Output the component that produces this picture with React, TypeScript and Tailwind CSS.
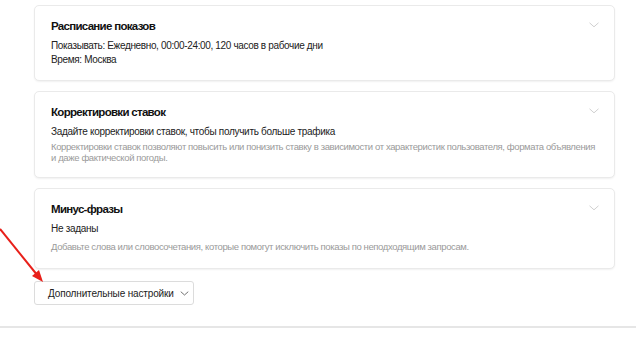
import { ReactNode } from 'react';

function Chevron({ className }: { className?: string }) {
  return (
    <svg viewBox="0 0 10 6" className={className} fill="none">
      <path d="M0.5 0.8 L5 4.8 L9.5 0.8" stroke="currentColor" strokeWidth="1" />
    </svg>
  );
}

function Card({ title, children }: { title: string; children: ReactNode }) {
  return (
    <div className="relative bg-white border border-[#eaeaea] rounded-[5px] shadow-[0_1px_2px_rgba(0,0,0,0.06)] px-4 pt-[11px]">
      <Chevron className="absolute right-[15px] top-[16px] w-[10px] h-[6px] text-[#d0d0d0]" />
      <div className="text-[11.5px] leading-[18px] font-bold tracking-[-0.7px] text-[#111]">{title}</div>
      {children}
    </div>
  );
}

export default function App() {
  return (
    <div
      className="relative w-[636px] h-[338px] bg-white overflow-hidden"
      style={{ fontFamily: '"Liberation Sans", Arial, sans-serif' }}
    >
      <div className="w-[581px] ml-[34px] pt-[5px] flex flex-col gap-[10px]">
        <Card title="Расписание показов">
          <div className="mt-1 pb-[13px] text-[10px] leading-[14px] tracking-[-0.35px] text-[#222]">
            <div>Показывать: Ежедневно, 00:00-24:00, 120 часов в рабочие дни</div>
            <div>Время: Москва</div>
          </div>
        </Card>

        <Card title="Корректировки ставок">
          <div className="mt-1 text-[10px] leading-[14px] tracking-[-0.3px] text-[#222]">
            Задайте корректировки ставок, чтобы получить больше трафика
          </div>
          <div className="mt-[2px] pb-[14px] text-[9.5px] leading-[11px] tracking-[-0.38px] text-[#9a9a9a] whitespace-nowrap">
            Корректировки ставок позволяют повысить или понизить ставку в зависимости от характеристик пользователя, формата объявления
            <br />
            и даже фактической погоды.
          </div>
        </Card>

        <Card title="Минус-фразы">
          <div className="mt-1 text-[10px] leading-[14px] tracking-[-0.3px] text-[#222]">Не заданы</div>
          <div className="mt-[5px] pb-[15px] text-[9.5px] leading-[12px] tracking-[-0.38px] text-[#9a9a9a]">
            Добавьте слова или словосочетания, которые помогут исключить показы по неподходящим запросам.
          </div>
        </Card>
      </div>

      <div className="ml-[34px] mt-[12px]">
        <button className="w-[160px] h-[24px] bg-white border border-[#dcdcdc] rounded-[3px] flex items-center pl-[13px] gap-[6px] text-[10px] tracking-[-0.15px] text-[#222] whitespace-nowrap">
          <span>Дополнительные настройки</span>
          <Chevron className="w-[9px] h-[5px] text-[#555]" />
        </button>
      </div>

      <div className="mt-[21px] h-[2px] bg-[#e6e6e6]" />

      <svg className="absolute left-0 top-[225px] w-[50px] h-[62px]" viewBox="0 0 50 62">
        <line x1="0" y1="4" x2="38" y2="51" stroke="#e8201a" strokeWidth="2" />
        <polygon points="43,57 32,51 39,45" fill="#e8201a" />
      </svg>
    </div>
  );
}
